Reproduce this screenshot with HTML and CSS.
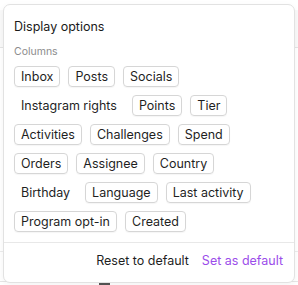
FILE: index.html
```html
<!DOCTYPE html>
<html lang="en">
<head>
  <meta charset="UTF-8">
  <title>Display options</title>
  <link rel="stylesheet" href="styles.css">
</head>
<body>

<div class="backdrop">
  <div class="bg-head"></div>
  <div class="bg-row"></div>
  <div class="bg-foot"><span class="bg-mark"></span></div>
</div>

<div class="popover">
  <h2>Display options</h2>
  <div class="label">Columns</div>
  <div class="chips">
    <span class="chip on">Inbox</span>
    <span class="chip on">Posts</span>
    <span class="chip on">Socials</span>
    <span class="chip">Instagram rights</span>
    <span class="chip on">Points</span>
    <span class="chip on">Tier</span>
    <span class="chip on">Activities</span>
    <span class="chip on">Challenges</span>
    <span class="chip on">Spend</span>
    <span class="chip on">Orders</span>
    <span class="chip on">Assignee</span>
    <span class="chip on">Country</span>
    <span class="chip">Birthday</span>
    <span class="chip on">Language</span>
    <span class="chip on">Last activity</span>
    <span class="chip on">Program opt-in</span>
    <span class="chip on">Created</span>
  </div>
  <div class="footer">
    <button class="reset">Reset to default</button>
    <button class="save">Set as default</button>
  </div>
</div>

</body>
</html>
```

FILE: styles.css
```css
* { box-sizing: border-box; }
body {
  margin: 0;
  font-family: Inter, 'Noto Sans', sans-serif;
  background: #fff;
  color: #1f1f1f;
  width: 298px;
  height: 285px;
  overflow: hidden;
  position: relative;
}

/* page behind the popover */
.backdrop {
  position: absolute;
  inset: 0;
}
.bg-head {
  height: 48px;
  margin-top: 0;
  background: linear-gradient(to bottom, #fff 0, #fff 10px, #f9f9f9 10px);
  border-bottom: 1px solid #e4e4e4;
}
.bg-row {
  height: 204px;
  border-bottom: 1px solid #ececec;
}
.bg-foot {
  margin-top: 29px;
  border-top: 1px solid #e6e6e6;
  padding-left: 99px;
}
.bg-mark {
  display: block;
  width: 11px;
  height: 3px;
  background: #555;
}

.popover {
  position: absolute;
  left: 3px;
  top: 4px;
  width: 292px;
  height: 279px;
  background: #fff;
  border: 1px solid #e2e2e2;
  border-radius: 7px;
  box-shadow: 0 2px 6px rgba(0, 0, 0, 0.05);
  display: flex;
  flex-direction: column;
}
h2 {
  margin: 14px 0 0 10px;
  font-size: 12.5px;
  font-weight: 400;
  line-height: 16px;
  color: #1a1a1a;
}
.label {
  margin: 9.5px 0 0 10px;
  font-size: 10.5px;
  line-height: 14px;
  color: #8c8c8c;
}
.chips {
  display: flex;
  flex-wrap: wrap;
  gap: 8px 8px;
  padding: 7.5px 10px 0 10px;
}
.chip {
  font-size: 12.5px;
  line-height: 19px;
  padding: 0 6px;
  border: 1px solid transparent;
  border-radius: 4px;
  color: #1f1f1f;
}
.chip.on {
  border-color: #d6d6d6;
  box-shadow: 0 1px 1px rgba(0, 0, 0, 0.04);
}
.footer {
  margin-top: 10px;
  border-top: 1px solid #e8e8e8;
  display: flex;
  justify-content: flex-end;
  gap: 13px;
  padding: 10px 11px 0 0;
}
.footer button {
  background: none;
  border: none;
  padding: 0;
  font-family: inherit;
  font-size: 12.5px;
  line-height: 16px;
  cursor: pointer;
}
.reset { color: #1f1f1f; }
.save { color: #9b4dea; }
```
